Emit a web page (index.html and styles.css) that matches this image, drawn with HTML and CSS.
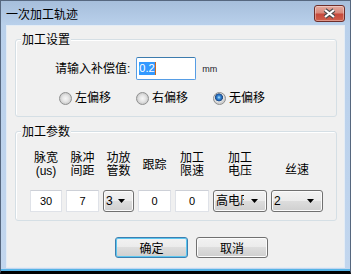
FILE: index.html
```html
<!DOCTYPE html>
<html lang="zh-CN">

<head>
    <meta charset="UTF-8">
    <title>一次加工轨迹</title>
    <link rel="stylesheet" href="styles.css">
</head>

<body>
    <div class="window">
        <div class="titlebar">
            <span class="title">一次加工轨迹</span>
            <div class="close-btn">
                <svg width="15" height="11" viewBox="0 0 15 11">
                    <path d="M3 2 L12 9 M12 2 L3 9" stroke="#4b4b4b" stroke-width="4.2" fill="none" />
                    <path d="M3 2 L12 9 M12 2 L3 9" stroke="#ffffff" stroke-width="2.2" fill="none" />
                </svg>
            </div>
        </div>

        <div class="client">
            <!-- 加工设置 -->
            <div class="group group-setup">
                <span class="group-title">加工设置</span>
                <div class="offset-row">
                    <span class="field-label">请输入补偿值:</span>
                    <div class="textbox focused"><span class="sel">0.2</span><span class="caret"></span></div>
                    <span class="unit">mm</span>
                </div>
                <div class="radio-row">
                    <label class="radio-item"><span class="radio"></span>左偏移</label>
                    <label class="radio-item"><span class="radio"></span>右偏移</label>
                    <label class="radio-item"><span class="radio checked"></span>无偏移</label>
                </div>
            </div>

            <!-- 加工参数 -->
            <div class="group group-params">
                <span class="group-title">加工参数</span>
                <div class="param-grid">
                    <div class="param-label">脉宽<br>(us)</div>
                    <div class="param-label">脉冲<br>间距</div>
                    <div class="param-label">功放<br>管数</div>
                    <div class="param-label">跟踪</div>
                    <div class="param-label">加工<br>限速</div>
                    <div class="param-label">加工<br>电压</div>
                    <div class="param-label low">丝速</div>

                    <input class="num" type="text" value="30" readonly>
                    <input class="num" type="text" value="7" readonly>
                    <div class="combo"><span class="combo-text">3</span><svg class="arrow" width="7" height="4"><polygon points="0,0 7,0 3.5,4" fill="#000" /></svg></div>
                    <input class="num" type="text" value="0" readonly>
                    <input class="num" type="text" value="0" readonly>
                    <div class="combo"><span class="combo-text">高电压</span><svg class="arrow" width="7" height="4"><polygon points="0,0 7,0 3.5,4" fill="#000" /></svg></div>
                    <div class="combo"><span class="combo-text">2</span><svg class="arrow" width="7" height="4"><polygon points="0,0 7,0 3.5,4" fill="#000" /></svg></div>
                </div>
            </div>

            <div class="buttons">
                <button class="btn btn-default">确定</button>
                <button class="btn btn-cancel">取消</button>
            </div>
        </div>
    </div>
</body>

</html>
```

FILE: styles.css
```css
body {
    margin: 0;
    background: #000;
    font-family: "Liberation Sans", "Noto Sans CJK SC", sans-serif;
    font-size: 12px;
    color: #000;
}

.window {
    width: 351px;
    height: 274px;
    box-sizing: border-box;
    display: flex;
    flex-direction: column;
    border: 1px solid #56677f;
    border-bottom: 3px solid #000;
    background: linear-gradient(to bottom, #a6bedb 0, #b9d0eb 24px, #c2d6ee 100%);
    box-shadow: inset 0 -2px #56b3e6;
}

/* title bar */
.titlebar {
    height: 24px;
    flex: none;
    display: flex;
    align-items: flex-start;
    padding-left: 5px;
}

.title {
    margin-top: 6px;
    line-height: 14px;
    font-family: "Noto Sans CJK SC", sans-serif;
    font-size: 12px;
}

.close-btn {
    margin-left: auto;
    margin-right: 5px;
    margin-top: 4px;
    width: 31px;
    height: 17px;
    box-sizing: border-box;
    display: flex;
    align-items: center;
    justify-content: center;
    border: 1px solid #6e2e2a;
    border-radius: 3px;
    background: linear-gradient(to bottom, #e3aa9f 0%, #d98a7c 45%, #c5493b 55%, #d0604c 100%);
    box-shadow: inset 0 0 0 1px rgba(255, 255, 255, 0.35);
}

/* client area */
.client {
    flex: 1;
    margin: 0 5px 3px;
    border: 1px solid #e4ecf5;
    background: #f0f0f0;
    display: flex;
    flex-direction: column;
}

.group {
    position: relative;
    box-sizing: border-box;
    border: 1px solid #d5dfe5;
    border-radius: 3px;
    box-shadow: inset 1px 1px #fff;
    margin-left: 8px;
    margin-right: 7px;
}

.group-title {
    position: absolute;
    left: 5px;
    top: -8px;
    padding: 0 1px;
    line-height: 14px;
    background: #f0f0f0;
    font-family: "Noto Sans CJK SC", sans-serif;
}

.group-setup {
    margin-top: 13px;
    height: 78px;
    padding-top: 17px;
}

.offset-row {
    display: flex;
    align-items: center;
    padding-left: 39px;
}

.field-label {
    line-height: 14px;
    margin-right: 6px;
}

.textbox {
    width: 60px;
    height: 23px;
    box-sizing: border-box;
    display: flex;
    align-items: center;
    padding-left: 2px;
    background: #fff;
    border: 1px solid #e2e3ea;
    border-radius: 2px;
}

.textbox.focused {
    border-color: #569de5;
    border-top-color: #3d7bad;
}

.sel {
    font-size: 11px;
    line-height: 13px;
    background: #3399ff;
    color: #fff;
}

.caret {
    width: 1px;
    height: 13px;
    background: #cc6a1e;
}

.unit {
    margin-left: 6px;
    font-size: 9px;
    color: #1b1b2b;
}

.radio-row {
    display: flex;
    gap: 25px;
    margin-top: 11px;
    padding-left: 43px;
}

.radio-item {
    display: flex;
    align-items: center;
    line-height: 14px;
}

.radio {
    flex: none;
    width: 13px;
    height: 13px;
    box-sizing: border-box;
    margin-right: 3px;
    border-radius: 50%;
    border: 1px solid #8e8f8f;
    background: radial-gradient(circle at 50% 50%, #f6f6f6 0, #e6e6e6 3px, #cdcdcd 5.5px);
}

.radio.checked {
    background: radial-gradient(circle at 45% 40%, #b9e6ff 0, #3c8ed8 1.6px, #1d5aa8 3.1px, #2a4e7c 3.7px, #e8e8e8 4.3px, #d0d0d0 5.5px);
}

/* parameters */
.group-params {
    margin-top: 14px;
    height: 90px;
    padding: 20px 0 0 14px;
}

.param-grid {
    display: grid;
    grid-template-columns: 32px 33px 31px 33px 34px 54px 52px;
    grid-template-rows: 26px 22px;
    column-gap: 4px;
    row-gap: 12px;
    align-items: center;
}

.param-label {
    text-align: center;
    line-height: 13px;
    white-space: nowrap;
}

.param-label.low {
    margin-top: 10px;
}

.num {
    width: 100%;
    height: 22px;
    box-sizing: border-box;
    margin: 0;
    padding: 0;
    border: 1px solid #dfe2e8;
    border-top-color: #cdd0d7;
    background: #fff;
    font-family: "Liberation Sans", sans-serif;
    font-size: 11px;
    text-align: center;
    color: #000;
    outline: none;
}

.combo {
    height: 22px;
    box-sizing: border-box;
    display: flex;
    align-items: center;
    padding: 0 8px 0 2px;
    border: 1px solid #707070;
    border-radius: 3px;
    background: linear-gradient(to bottom, #f2f2f2 0%, #ebebeb 50%, #dddddd 50%, #cfcfcf 100%);
    box-shadow: inset 0 0 0 1px #fbfbfb;
}

.combo-text {
    max-width: 28px;
    overflow: hidden;
    white-space: nowrap;
    line-height: 14px;
}

.arrow {
    flex: none;
    margin-left: auto;
}

/* buttons */
.buttons {
    display: flex;
    gap: 8px;
    margin: 16px 0 0 108px;
}

.btn {
    width: 72px;
    height: 21px;
    box-sizing: border-box;
    padding: 0;
    border: 1px solid #707070;
    border-radius: 3px;
    background: linear-gradient(to bottom, #f2f2f2 0%, #ebebeb 50%, #dddddd 50%, #cfcfcf 100%);
    box-shadow: inset 0 0 0 1px #fcfcfc;
    font-family: "Noto Sans CJK SC", sans-serif;
    font-size: 12px;
    color: #000;
}

.btn-default {
    width: 73px;
    border-color: #3c7fb1;
    box-shadow: inset 0 0 0 1px #5cc6ef;
}
```
